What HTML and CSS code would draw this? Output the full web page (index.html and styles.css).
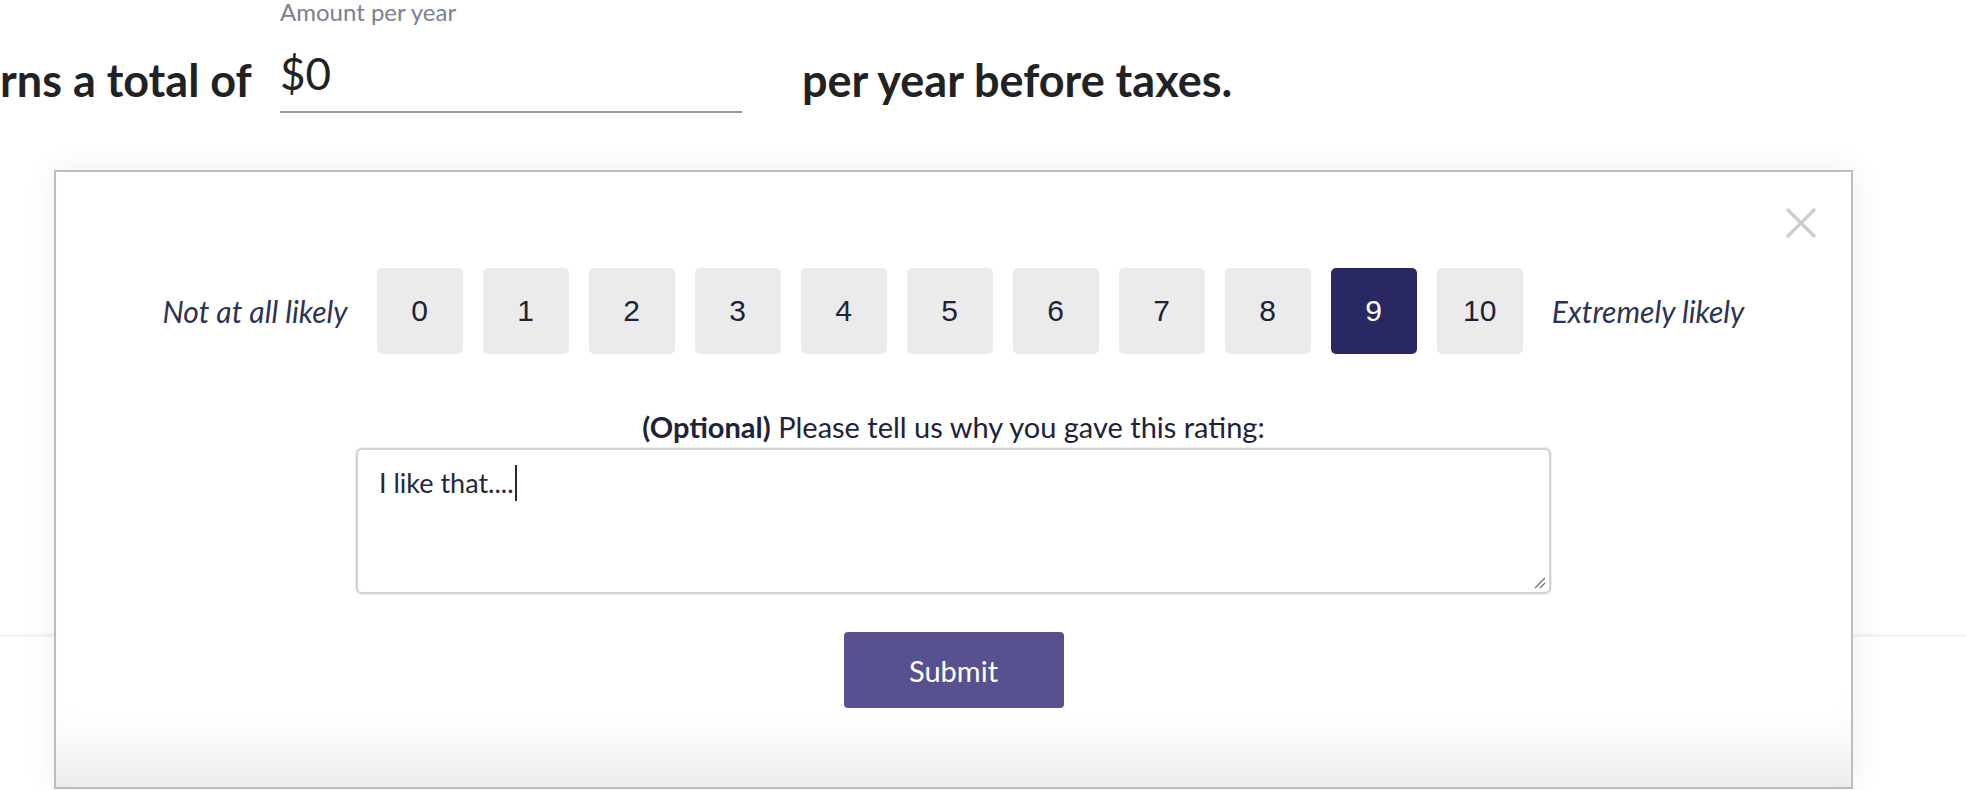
FILE: index.html
```html
<!DOCTYPE html>
<html lang="en">
<head>
<meta charset="utf-8">
<title>Feedback</title>
<link rel="stylesheet" href="styles.css">
</head>
<body>
<div class="page">
  <div class="summary">
    <div class="lead">rns a total of</div>
    <div class="field">
      <label class="field-label">Amount per year</label>
      <div class="field-input">$0</div>
    </div>
    <div class="tail">per year before taxes.</div>
  </div>
  <div class="divider"></div>
</div>

<div class="modal">
  <button class="close" aria-label="Close">
    <svg width="32" height="30" viewBox="0 0 32 30"><path d="M2 1 L30 29 M30 1 L2 29" stroke="#cccccc" stroke-width="3.2" fill="none"/></svg>
  </button>
  <div class="scale">
    <span class="scale-label">Not at all likely</span>
    <div class="scale-buttons">
      <button class="score">0</button>
      <button class="score">1</button>
      <button class="score">2</button>
      <button class="score">3</button>
      <button class="score">4</button>
      <button class="score">5</button>
      <button class="score">6</button>
      <button class="score">7</button>
      <button class="score">8</button>
      <button class="score is-selected">9</button>
      <button class="score">10</button>
    </div>
    <span class="scale-label">Extremely likely</span>
  </div>
  <p class="prompt"><strong>(Optional)</strong> Please tell us why you gave this rating:</p>
  <div class="comment">I like that....<span class="caret"></span>
    <svg class="grip" width="12" height="12" viewBox="0 0 12 12"><path d="M1 11 L11 1 M6 11 L11 6" stroke="#6b6b6b" stroke-width="1.2" fill="none"/></svg>
  </div>
  <button class="submit">Submit</button>
</div>
</body>
</html>
```

FILE: styles.css
```css
html, body {
  margin: 0;
  padding: 0;
}

body {
  position: relative;
  height: 790px;
  overflow: hidden;
  background: #ffffff;
  font-family: Lato, "Noto Sans", sans-serif;
  color: #1e2339;
}

.summary {
  display: flex;
  align-items: flex-start;
  height: 120px;
}

.lead {
  flex: none;
  width: 250px;
  white-space: nowrap;
  padding-top: 53px;
  font-size: 45px;
  line-height: 54px;
  font-weight: 700;
  color: #222222;
}

.field {
  flex: none;
  width: 462px;
  margin-left: 30px;
  display: flex;
  flex-direction: column;
}

.field-label {
  font-size: 24px;
  line-height: 24px;
  color: #7b8092;
}

.field-input {
  padding: 23px 0 12px;
  font-size: 44px;
  line-height: 52px;
  font-weight: 400;
  color: #222222;
  border-bottom: 2px solid #9a9a9a;
}

.tail {
  flex: none;
  margin-left: 60px;
  padding-top: 53px;
  font-size: 45px;
  line-height: 54px;
  font-weight: 700;
  white-space: nowrap;
  color: #222222;
}

.divider {
  margin-top: 514px;
  height: 3px;
  background: #f3f3f3;
}

.modal {
  position: absolute;
  left: 54px;
  top: 170px;
  width: 1799px;
  height: 619px;
  box-sizing: border-box;
  border: 2px solid #bdbdbd;
  background: #ffffff;
  box-shadow: 0 0 30px rgba(0, 0, 0, 0.07), inset 0 -70px 60px -45px rgba(0, 0, 0, 0.09);
  display: flex;
  flex-direction: column;
  align-items: center;
  padding-top: 96px;
}

.close {
  position: absolute;
  top: 36px;
  right: 34px;
  width: 32px;
  height: 30px;
  padding: 0;
  border: 0;
  background: none;
}

.close svg {
  display: block;
}

.scale {
  display: flex;
  align-items: center;
  gap: 29px;
}

.scale-label {
  font-size: 30px;
  font-style: italic;
  color: #2e3352;
  white-space: nowrap;
}

.scale-buttons {
  display: flex;
  gap: 20px;
}

.score {
  width: 86px;
  height: 86px;
  padding: 0;
  border: 0;
  border-radius: 5px;
  background: #ebebeb;
  font-family: "Liberation Sans", Arial, sans-serif;
  font-size: 30px;
  color: #1e2339;
}

.score.is-selected {
  background: #2a2862;
  color: #ffffff;
}

.prompt {
  margin: 58px 0 0;
  font-size: 29px;
  line-height: 30px;
  color: #1e2339;
}

.prompt strong {
  font-weight: 700;
}

.comment {
  position: relative;
  box-sizing: border-box;
  width: 1195px;
  height: 146px;
  margin-top: 6px;
  padding: 15px 21px;
  border: 2px solid #cfd2d9;
  border-radius: 6px;
  box-shadow: 0 0 0 1px #eceef1;
  font-size: 27px;
  line-height: 36px;
  color: #24283a;
}

.caret {
  display: inline-block;
  width: 2px;
  height: 36px;
  margin-left: 1px;
  vertical-align: top;
  background: #24283a;
}

.grip {
  position: absolute;
  right: 3px;
  bottom: 3px;
}

.submit {
  margin-top: 38px;
  width: 220px;
  height: 76px;
  border: 0;
  border-radius: 4px;
  background: #57518f;
  color: #ffffff;
  font-family: Lato, "Noto Sans", sans-serif;
  font-size: 29px;
  font-weight: 400;
}
```
